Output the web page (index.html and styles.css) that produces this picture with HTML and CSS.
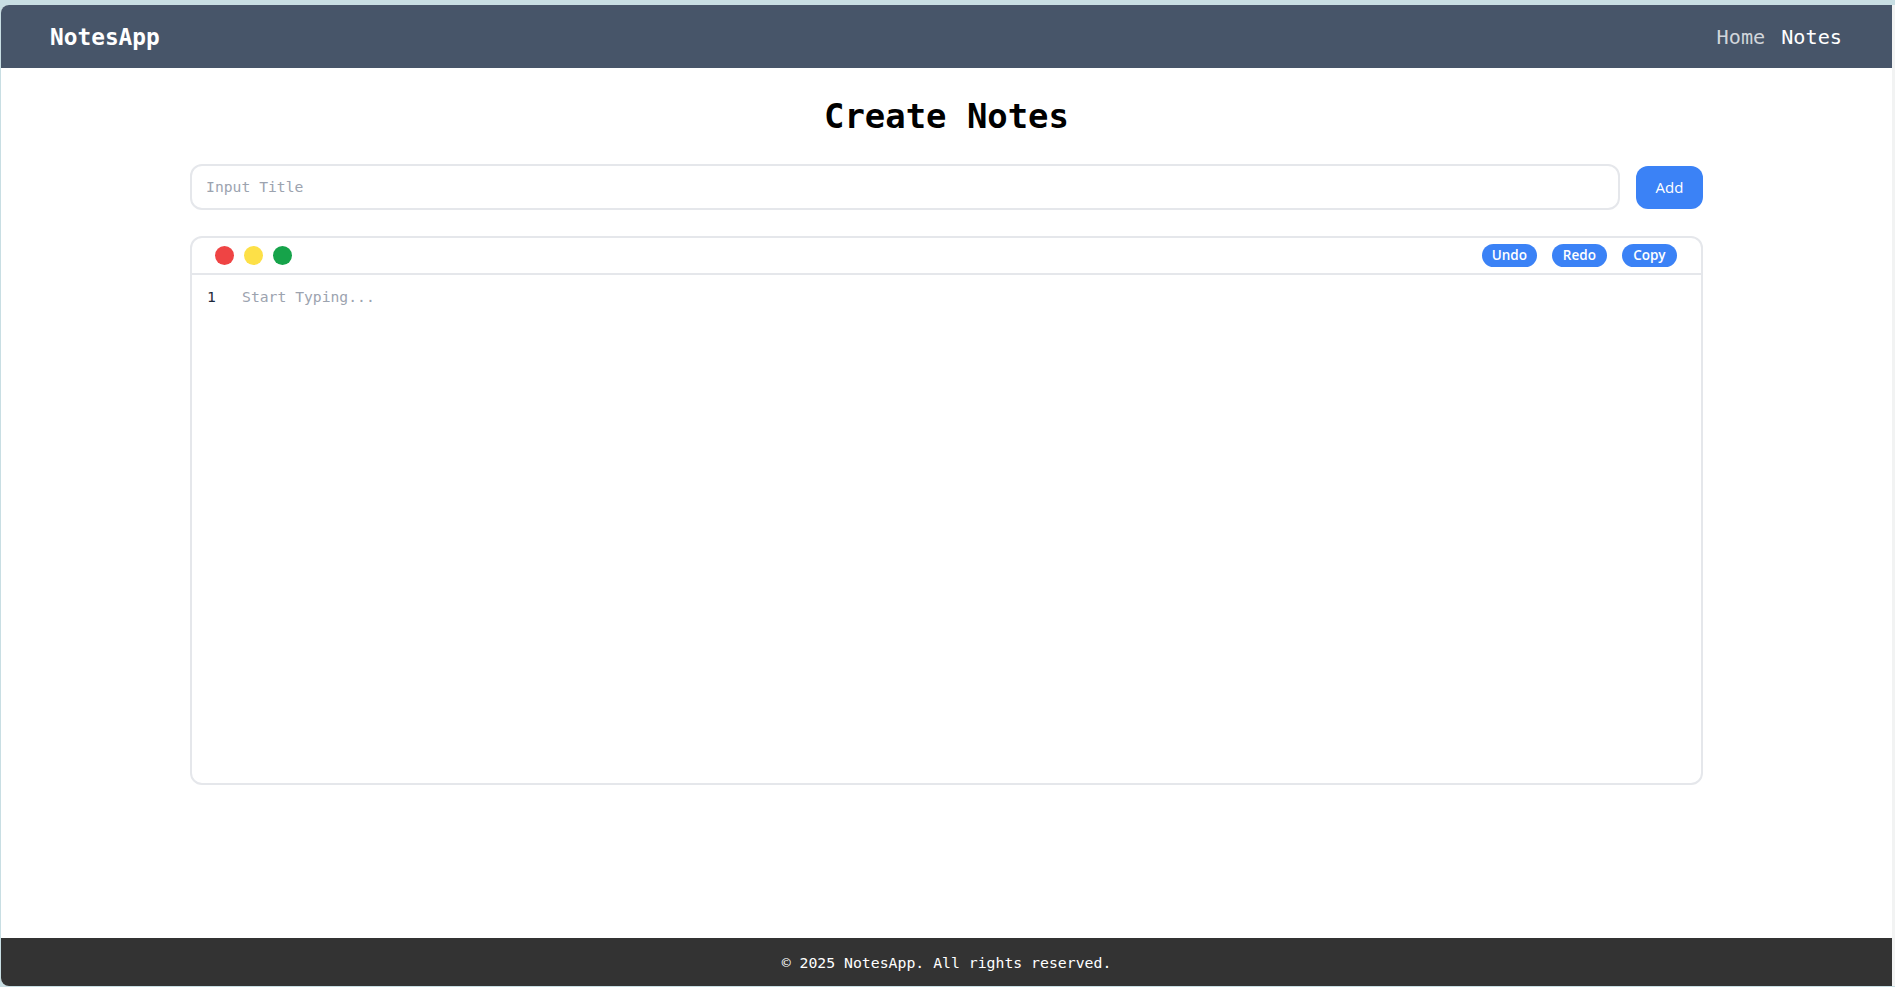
FILE: index.html
```html
<!DOCTYPE html>
<html lang="en">
<head>
<meta charset="utf-8">
<title>NotesApp</title>
<link rel="stylesheet" href="styles.css">
</head>
<body>
  <div class="window">
    <nav class="navbar">
      <a class="brand" href="#">NotesApp</a>
      <div class="nav-links">
        <a class="nav-link" href="#">Home</a>
        <a class="nav-link active" href="#">Notes</a>
      </div>
    </nav>
    <main class="main">
      <h1 class="title">Create Notes</h1>
      <div class="container">
        <div class="title-row">
          <input class="title-input" type="text" placeholder="Input Title">
          <button class="add-btn">Add</button>
        </div>
        <div class="editor">
          <div class="editor-header">
            <div class="dots">
              <span class="dot red"></span>
              <span class="dot yellow"></span>
              <span class="dot green"></span>
            </div>
            <div class="actions">
              <button class="pill">Undo</button>
              <button class="pill">Redo</button>
              <button class="pill">Copy</button>
            </div>
          </div>
          <div class="editor-body">
            <div class="gutter">1</div>
            <textarea class="editor-text" placeholder="Start Typing..."></textarea>
          </div>
        </div>
      </div>
    </main>
    <footer class="footer">© 2025 NotesApp. All rights reserved.</footer>
  </div>
</body>
</html>
```
FILE: styles.css
```css
html, body {
  margin: 0;
  height: 100%;
  background: #c8dee3;
}

body {
  padding: 5px 0 1px 1px;
  box-sizing: border-box;
  display: flex;
  font-family: "DejaVu Sans Mono", monospace;
}

.window {
  flex: 1;
  display: flex;
  flex-direction: column;
  background: #ffffff;
  border-radius: 8px 0 0 8px;
  overflow: hidden;
  border-right: 3px solid #f2f3f3;
}

.navbar {
  flex: none;
  height: 63px;
  background: #475569;
  display: flex;
  align-items: center;
  justify-content: space-between;
  padding: 0 50px 0 49px;
}

.brand {
  color: #ffffff;
  text-decoration: none;
  font-weight: bold;
  font-size: 22.8px;
}

.nav-links {
  display: flex;
  gap: 16px;
}

.nav-link {
  color: #d1d5db;
  text-decoration: none;
  font-size: 20.2px;
}

.nav-link.active {
  color: #ffffff;
}

.main {
  flex: 1;
  display: flex;
  flex-direction: column;
  align-items: center;
}

.title {
  margin: 29px 0 0;
  font-size: 33.9px;
  line-height: 40px;
  font-weight: bold;
  color: #000000;
}

.container {
  width: 80%;
  margin-top: 27px;
}

.title-row {
  display: flex;
  align-items: center;
  gap: 16px;
  height: 46px;
}

.title-input {
  flex: 1;
  height: 46px;
  box-sizing: border-box;
  border: 2px solid #e5e7eb;
  border-radius: 12px;
  padding: 0 14px 1px;
  font-family: "DejaVu Sans Mono", monospace;
  font-size: 14.7px;
  color: #374151;
  outline: none;
}

.title-input::placeholder {
  color: #9ca3af;
}

.add-btn {
  width: 67px;
  height: 43px;
  border: none;
  border-radius: 12px;
  background: #3b82f6;
  color: #ffffff;
  font-family: "Open Sans", sans-serif;
  font-weight: 500;
  font-size: 15px;
  padding: 0;
}

.editor {
  margin-top: 26px;
  height: 549px;
  box-sizing: border-box;
  border: 2px solid #e5e7eb;
  border-radius: 12px;
  display: flex;
  flex-direction: column;
}

.editor-header {
  height: 37px;
  box-sizing: border-box;
  border-bottom: 2px solid #e5e7eb;
  display: flex;
  align-items: center;
  justify-content: space-between;
  padding: 0 24px 0 23px;
}

.dots {
  display: flex;
  gap: 10px;
}

.dot {
  width: 19px;
  height: 19px;
  border-radius: 50%;
}

.dot.red { background: #ef4444; }
.dot.yellow { background: #fde047; }
.dot.green { background: #16a34a; }

.actions {
  display: flex;
  gap: 15px;
}

.pill {
  height: 23px;
  min-width: 55px;
  padding: 0 10px;
  border: none;
  border-radius: 999px;
  background: #3b82f6;
  color: #ffffff;
  font-family: "Open Sans", sans-serif;
  font-weight: 600;
  font-size: 13.5px;
  line-height: 23px;
}

.editor-body {
  flex: 1;
  display: flex;
  padding-top: 12px;
}

.gutter {
  width: 50px;
  box-sizing: border-box;
  padding-left: 15px;
  font-size: 14.7px;
  line-height: 20px;
  color: #1e293b;
}

.editor-text {
  flex: 1;
  border: none;
  outline: none;
  resize: none;
  padding: 0;
  margin: 0;
  background: transparent;
  font-family: "DejaVu Sans Mono", monospace;
  font-size: 14.7px;
  line-height: 20px;
  color: #374151;
}

.editor-text::placeholder {
  color: #9ca3af;
}

.footer {
  flex: none;
  height: 48px;
  background: #333333;
  color: #ffffff;
  display: flex;
  align-items: center;
  justify-content: center;
  font-size: 14.8px;
}
```
